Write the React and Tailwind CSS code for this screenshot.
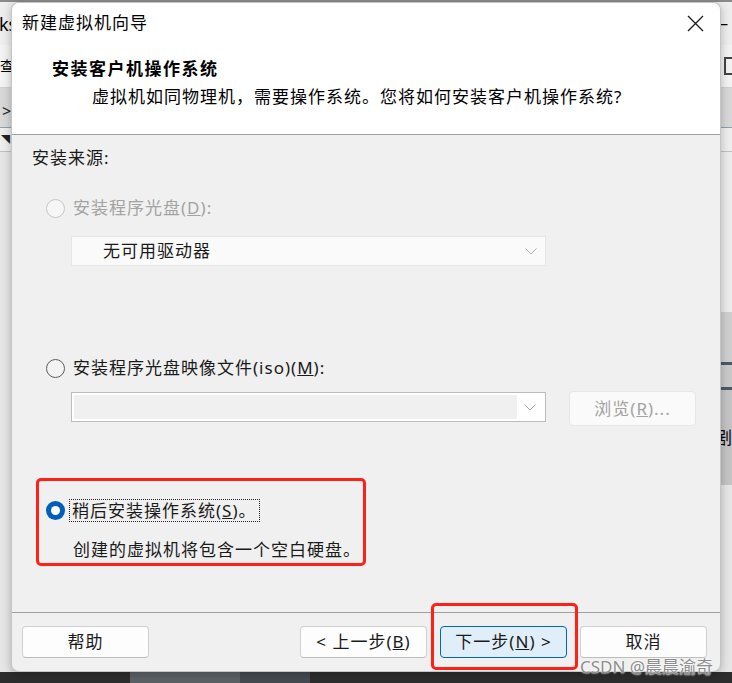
import { useState } from "react";

const font = { fontFamily: '"Noto Sans", "Noto Sans CJK SC", sans-serif' };

function Chevron({ color = "#9a9a9a" }) {
	return (
		<svg width="12" height="7" viewBox="0 0 12 7">
			<path d="M0.5 0.5 L6 6 L11.5 0.5" fill="none" stroke={color} strokeWidth="1" />
		</svg>
	);
}

function Radio({ state }) {
	if (state === "checked") {
		return (
			<span className="flex items-center justify-center w-[19px] h-[19px] rounded-full bg-[#005fb8] shrink-0">
				<span className="w-[9px] h-[9px] rounded-full bg-white" />
			</span>
		);
	}
	if (state === "disabled") {
		return <span className="w-[19px] h-[19px] rounded-full border border-[#c6c6c6] bg-[#f6f6f6] shrink-0" />;
	}
	return <span className="w-[19px] h-[19px] rounded-full border border-[#5c5c5c] bg-[#f3f3f3] shrink-0" />;
}

function Button({ children, primary }) {
	return (
		<button
			className={
				primary
					? "w-[127px] h-[32px] rounded-[4px] border border-[#0067c0] bg-[#e0eef9] text-[17px] tracking-[1px] text-[#1a1a1a] flex items-center justify-center"
					: "w-[127px] h-[32px] rounded-[4px] border border-[#d0d0d0] border-b-[#bdbdbd] bg-[#fdfdfd] text-[17px] tracking-[1px] text-[#1a1a1a] flex items-center justify-center"
			}
		>
			{children}
		</button>
	);
}

export default function App() {
	const [choice, setChoice] = useState("later");

	return (
		<div className="relative w-[732px] h-[683px] overflow-hidden bg-[#e4e4e4]" style={font}>
			{/* background app behind the dialog */}
			<div className="absolute inset-0 flex flex-col">
				<div className="h-[2px] bg-[#8a8a8a]" />
				<div className="h-[43px] bg-[#eeeeee] flex items-center justify-between">
					<span className="text-[18px] text-black -ml-[1px] leading-none">ks</span>
					<span className="text-[14px] text-black mr-[4px]">—</span>
				</div>
				<div className="h-[43px] bg-[#f3f3f3] flex items-center justify-between border-b border-[#d0d0d0]">
					<span className="text-[14px] text-black ml-0 leading-none">查</span>
					<span className="w-[8px] h-[18px] border-l-2 border-t-2 border-b-2 border-[#444] mr-0" />
				</div>
				<div className="h-[40px] bg-[#d8d8d8] flex items-end justify-between pb-[4px] border-b border-[#8aa2b4]">
					<span className="text-[16px] text-[#222] ml-[2px]">&gt;</span>
				</div>
				<div className="h-[24px] bg-[#eeeeee] flex items-center border-b border-[#c0c0c0]">
					<span className="text-[9px] text-[#222] ml-[1px]">◥</span>
				</div>
				<div className="flex-1 flex">
					<div className="w-[11px] bg-[#e6e6e6]" />
					<div className="flex-1" />
					<div className="w-[11px] flex flex-col">
						<div className="h-[160px] bg-[#ececec]" />
						<div className="h-[50px] bg-[#cfcfcf]" />
						<div className="h-[3px] bg-[#4d5963]" />
						<div className="h-[22px] bg-[#c9c9c9]" />
						<div className="h-[3px] bg-[#4d5963]" />
						<div className="h-[95px] bg-[#c4c4c4] flex items-center">
							<span className="text-[17px] text-black -ml-[6px]">剧</span>
						</div>
						<div className="flex-1 bg-[#e6e6e6]" />
					</div>
				</div>
				<div className="h-[11px] bg-[#2d2d2d] flex">
					<div className="w-[130px]" />
					<div className="w-[110px] bg-[#5c6166]" />
					<div className="w-[70px] bg-[#444a50]" />
				</div>
			</div>

			{/* dialog window */}
			<div className="absolute left-[11px] top-[2px] w-[710px] h-[670px] rounded-[8px] overflow-hidden bg-[#f0f0f0] border border-[#a8a8a8]/60 shadow-[0_2px_10px_rgba(0,0,0,0.25)] flex flex-col text-[#1a1a1a]">
				<div className="h-[132px] bg-white border-b border-[#a0a0a0] flex flex-col">
					<div className="h-[40px] flex items-center justify-between pl-[10px] pr-[16px]">
						<span className="text-[17px] tracking-[1px] text-black">新建虚拟机向导</span>
						<svg width="17" height="17" viewBox="0 0 17 17">
							<path d="M1 1 L16 16 M16 1 L1 16" stroke="#1a1a1a" strokeWidth="1.3" />
						</svg>
					</div>
					<div className="pl-[40px] mt-[14px] h-[24px] leading-[24px] text-[17px] tracking-[1.5px] font-bold text-black">
						安装客户机操作系统
					</div>
					<div className="pl-[80px] mt-[4px] h-[24px] leading-[24px] text-[17px] tracking-[1px] text-black">
						虚拟机如同物理机，需要操作系统。您将如何安装客户机操作系统?
					</div>
				</div>

				<div className="flex-1 flex flex-col border-b border-[#a0a0a0] text-[17px] tracking-[1px]">
					<div className="pl-[20px] mt-[11px] h-[24px] leading-[24px]">安装来源:</div>

					<div className="pl-[34px] mt-[26px] h-[24px] flex items-center gap-[8px] text-[#a3a3a3]">
						<Radio state="disabled" />
						<span>
							安装程序光盘(<span className="underline">D</span>):
						</span>
					</div>
					<div className="ml-[59px] mt-[16px] w-[475px] h-[30px] bg-[#fafafa] border border-[#e6e6e6] flex items-center justify-between pl-[31px] pr-[8px]">
						<span>无可用驱动器</span>
						<Chevron color="#b0b0b0" />
					</div>

					<div
						className="pl-[34px] mt-[90px] h-[24px] flex items-center gap-[8px] cursor-default"
						onClick={() => setChoice("iso")}
					>
						<Radio state={choice === "iso" ? "checked" : "idle"} />
						<span>
							安装程序光盘映像文件(iso)(<span className="underline">M</span>):
						</span>
					</div>
					<div className="ml-[59px] mt-[11px] flex items-start gap-[23px]">
						<div className="mt-[1px] w-[475px] h-[30px] bg-white border border-[#bcbcbc] p-[2px] flex">
							<div className="flex-1 bg-[#f0f0f0]" />
							<div className="w-[26px] flex items-center justify-center">
								<Chevron color="#a8a8a8" />
							</div>
						</div>
						<div className="w-[127px] h-[35px] rounded-[4px] bg-[#fafafa] border border-[#e6e6e6] text-[#a3a3a3] flex items-center justify-center">
							浏览(<span className="underline">R</span>)...
						</div>
					</div>

					<div className="ml-[24px] mt-[52px] w-[330px] h-[88px] border-[3px] border-[#ff2018] rounded-[5px] pl-[7px] pt-[17px] flex flex-col">
						<div className="h-[24px] flex items-center gap-[4px]" onClick={() => setChoice("later")}>
							<Radio state={choice === "later" ? "checked" : "idle"} />
							<span className="h-[23px] leading-[21px] px-[2px] border border-dotted border-[#222]">
								稍后安装操作系统(<span className="underline">S</span>)。
							</span>
						</div>
						<div className="pl-[27px] mt-[16px] h-[24px] leading-[24px]">创建的虚拟机将包含一个空白硬盘。</div>
					</div>
				</div>

				<div className="h-[58px] relative flex items-start pt-[13px] pl-[10px] pr-[13px]">
					<Button>帮助</Button>
					<div className="flex-1" />
					<div className="flex gap-[13px]">
						<Button>
							&lt; 上一步(<span className="underline">B</span>)
						</Button>
						<Button primary>
							下一步(<span className="underline">N</span>) &gt;
						</Button>
						<Button>取消</Button>
					</div>
				</div>
			</div>

			{/* red annotation round the next button */}
			<div className="absolute left-[431px] top-[603px] w-[147px] h-[67px] border-[3px] border-[#ff2018] rounded-[5px]" />

			{/* watermark */}
			<div className="absolute left-[580px] top-[654px] text-[17px] text-[#8c8c8c] tracking-[0px] [text-shadow:0_0_2px_#ffffff,0_0_2px_#ffffff]">
				CSDN @晨晨渝奇
			</div>
		</div>
	);
}
